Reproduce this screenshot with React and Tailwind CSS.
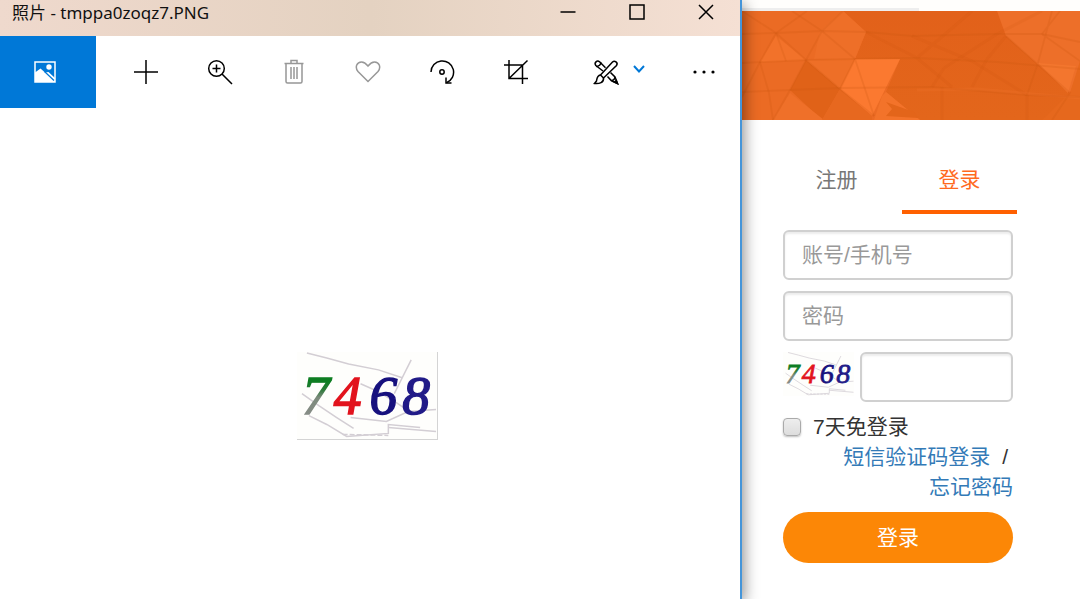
import { useState } from 'react';

// Captcha digits with their noise lines
function CaptchaImage({ className, id }) {
  return (
    <svg viewBox="0 0 141 88" className={className} role="img" aria-label="7468">
      <defs>
        <linearGradient id={id} x1="0" y1="0" x2="0" y2="1">
          <stop offset="0.3" stopColor="#0d7d22" />
          <stop offset="0.42" stopColor="#2b7a38" />
          <stop offset="0.55" stopColor="#7c8a7c" />
          <stop offset="1" stopColor="#8d8d8d" />
        </linearGradient>
      </defs>
      <rect width="141" height="88" fill="#fefefc" />
      <g fill="none" stroke="#d3ced4" strokeWidth="1.5">
        <path d="M10 1 L30 6 L52 12 L82 18 L106 26" />
        <path d="M5 42 L22 54 L40 66 L57 77" />
        <path d="M12 64 L30 73 L50 85 L92 82 L92 73 L124 76" />
        <path d="M64 32 L80 39 L100 51 L112 59" />
        <path d="M115 8 L98 42" />
        <path d="M54 66 L90 70 L112 60 L140 58" />
        <path d="M92 76 L140 80" />
        <path d="M46 83 L92 84" strokeDasharray="5 2" />
      </g>
      <g fontFamily="'Liberation Sans Narrow', 'Liberation Serif', serif" fontStyle="italic" fontSize="56" textAnchor="middle" strokeWidth="1.5">
        <text x="19" y="62" fill={`url(#${id})`} stroke={`url(#${id})`}>7</text>
        <text x="51" y="62" fill="#e2131d" stroke="#e2131d">4</text>
        <text x="87" y="62" fill="#17117e" stroke="#17117e">6</text>
        <text x="120" y="62" fill="#211b88" stroke="#211b88">8</text>
      </g>
    </svg>
  );
}

function Icon({ children, className = 'text-black' }) {
  return (
    <svg
      width="26"
      height="26"
      viewBox="0 0 26 26"
      fill="none"
      stroke="currentColor"
      strokeWidth="1.5"
      className={className}
      aria-hidden="true"
    >
      {children}
    </svg>
  );
}

const tools = [
  {
    name: '添加',
    icon: (
      <Icon>
        <path d="M13 1V25M1 13H25" />
      </Icon>
    ),
  },
  {
    name: '缩放',
    icon: (
      <Icon>
        <circle cx="9.5" cy="9.5" r="7.8" />
        <path d="M9.5 5.5V13.5M5.5 9.5H13.5M15 15L25 25" />
      </Icon>
    ),
  },
  {
    name: '删除',
    icon: (
      <Icon className="text-[#979797]">
        <path d="M3.5 4.5H22.5M10 4V1.5H16V4M5 4.5V22.5Q5 24 6.5 24H19.5Q21 24 21 22.5V4.5M10 8V20M13 8V20M16 8V20" />
      </Icon>
    ),
  },
  {
    name: '收藏',
    icon: (
      <Icon className="text-[#979797]">
        <path d="M13 22.5L3 12.5C-.5 8 2 3 6.5 3C9.5 3 11 4.5 13 7C15 4.5 16.5 3 19.5 3C24 3 26.5 8 23 12.5Z" />
      </Icon>
    ),
  },
  {
    name: '旋转',
    icon: (
      <Icon>
        <path d="M2 13A11.3 11.3 0 1 1 17.5 23.7" />
        <circle cx="13" cy="13" r="2.2" />
        <path d="M17 18.5V24H22.5" />
      </Icon>
    ),
  },
  {
    name: '裁剪',
    icon: (
      <Icon>
        <path d="M1 6H19.5V25M6 1V19.5H25M6 19.5L24.5 1.5" />
      </Icon>
    ),
  },
];

function PhotoViewer() {
  return (
    <main className="relative z-10 flex min-w-0 flex-1 flex-col border-r-2 border-[#4495d9] bg-white shadow-[2px_4px_14px_rgba(0,0,0,0.45)]">
      {/* Title bar */}
      <header className="flex h-9 items-start justify-between bg-linear-to-r from-[#efd9cd] via-[#e4d2c1] to-[#f5e0d4]">
        <h1 className="pl-3 font-['Noto_Sans','Noto_Sans_CJK_SC',sans-serif] text-[17px] leading-[26px] text-[#111]">
          照片 - tmppa0zoqz7.PNG
        </h1>
        <div className="flex text-black">
          <button type="button" aria-label="最小化" className="flex h-6 w-[69px] items-center justify-center">
            <svg width="16" height="16" viewBox="0 0 16 16" stroke="currentColor" strokeWidth="1.5">
              <path d="M0.5 8H15.5" />
            </svg>
          </button>
          <button type="button" aria-label="最大化" className="flex h-6 w-[69px] items-center justify-center">
            <svg width="16" height="16" viewBox="0 0 16 16" fill="none" stroke="currentColor" strokeWidth="1.5">
              <rect x="1" y="1" width="14" height="14" />
            </svg>
          </button>
          <button type="button" aria-label="关闭" className="flex h-6 w-[69px] items-center justify-center">
            <svg width="16" height="16" viewBox="0 0 16 16" stroke="currentColor" strokeWidth="1.5">
              <path d="M1 1L15 15M15 1L1 15" />
            </svg>
          </button>
        </div>
      </header>

      {/* Toolbar */}
      <nav className="flex h-[72px] items-stretch">
        <button type="button" aria-label="查看所有照片" className="mr-[13px] flex w-24 items-center justify-center bg-[#0078d7] pr-[6px]">
          <svg width="22" height="22" viewBox="0 0 22 22">
            <path d="M1 1H21V21H1Z" fill="none" stroke="#fff" strokeWidth="1.5" />
            <path d="M1 11.5L6.5 7.5L11 11.5L14.5 11L21 17V21H1Z" fill="#fff" />
            <path d="M10.5 10.5L20 19.5" stroke="#0078d7" strokeWidth="1.2" />
            <circle cx="15" cy="6" r="2.7" fill="#fff" />
          </svg>
        </button>
        {tools.map((tool) => (
          <button key={tool.name} type="button" aria-label={tool.name} className="flex w-[74px] items-center justify-center">
            {tool.icon}
          </button>
        ))}
        <div className="ml-auto flex">
          <button type="button" aria-label="编辑和创建" className="flex items-center gap-[14px] pr-[23px]">
            <Icon>
              {/* pencil, lying under the brush */}
              <g strokeWidth="1.5">
                <path d="M10 12L2.8 6.5C.8 3.8 4 .8 6.6 2.8L12.5 8.8" />
                <path d="M3 7.5C6 7.5 8 5.5 7.8 3.2" />
                <path d="M14.5 17.5L18.5 21.8L24.5 24.5L22 18L17.5 13.5M18.5 21.8C20.5 21.5 21.8 20 22 18" />
                <path d="M21.5 23L24.5 24.5L23.3 21.5Z" fill="currentColor" />
              </g>
              {/* brush */}
              <g strokeWidth="1.5">
                <path d="M7.5 16L19.5 3C21.5 1 25.5 3.5 23.5 6.5L10.5 19Z" fill="#fff" />
                <path d="M7.5 16C4 16.5 4 19 3.5 22L1.5 24.5C6.5 25 11 23.5 10.5 19" />
              </g>
            </Icon>
            <svg width="12" height="8" viewBox="0 0 12 8" fill="none" stroke="#0078d7" strokeWidth="2" className="mb-[6px]">
              <path d="M1 1L6 6.5L11 1" />
            </svg>
          </button>
          <button type="button" aria-label="更多" className="flex w-[72px] items-center justify-center">
            <svg width="22" height="4" viewBox="0 0 22 4">
              <circle cx="2" cy="2" r="1.6" />
              <circle cx="11" cy="2" r="1.6" />
              <circle cx="20" cy="2" r="1.6" />
            </svg>
          </button>
        </div>
      </nav>

      <section className="flex flex-1 items-start justify-center pt-[244px] pr-[6px]">
        <CaptchaImage id="photo-seven" className="w-[141px] border-r border-b border-[#d4d4d4]" />
      </section>
    </main>
  );
}

// Low-poly orange strip above the form
function Banner() {
  return (
    <svg viewBox="0 0 338 109" preserveAspectRatio="xMidYMid slice" className="block h-[109px] w-full" aria-hidden="true">
      <defs>
        <linearGradient id="banner-base" x1="0" y1="0" x2="0" y2="1">
          <stop offset="0" stopColor="#e2611a" />
          <stop offset="1" stopColor="#e3661b" />
        </linearGradient>
      </defs>
      <rect width="338" height="109" fill="url(#banner-base)" />
      <path d="M0 0H101L124 21L113 48H158L144 81L178 109H0Z" fill="#eb6b24" />
      <path d="M78 20L101 0L124 21L113 48L72 48Z" fill="#ee6f28" />
      <path d="M34 25L64 49L18 51Z" fill="#f2722a" />
      <path d="M113 48H158L130 105L98 78Z" fill="#fb7930" />
      <path d="M64 49L98 78L80 109L48 79Z" fill="#e06218" />
      <path d="M64 49L113 48L98 78Z" fill="#ee6f27" />
      <path d="M48 82L82 109H31Z" fill="#ef7029" />
      <path d="M98 78L130 105V109H80Z" fill="#e7681f" />
      <path d="M144 81L178 109H132L140 85Z" fill="#f3732a" />
      <path d="M144 91L172 101L176 107L144 105L150 98Z" fill="#e3651a" />
      <path d="M255 0H338V55L328 82L264 25Z" fill="#ed6f29" />
      <path d="M296 52L334 55L326 82Z" fill="#f3762e" />
      <path d="M338 50V109H300L328 82Z" fill="#e6681d" />
      <g fill="none" stroke="#c9530d" strokeOpacity="0.2" strokeWidth="1.8">
        <path d="M0 23L34 22L80 20L124 21L170 25L255 23L300 23L338 31" />
        <path d="M0 52L64 49L113 48L175 47L255 51L338 58" />
        <path d="M0 81L48 79L98 77L190 76L285 84L338 86" />
        <path d="M0 0L34 22L64 49L98 78L132 105M65 0L34 22L18 51L0 86" />
        <path d="M50 0L80 20L113 48M101 0L80 20L64 49L48 79L31 109" />
        <path d="M18 51L27 82L31 109M113 48L98 78M113 48L132 105" />
        <path d="M34 22L44 50M264 25L328 82L310 109M300 23L318 0M300 23L338 50M285 84L296 52L310 0" />
      </g>
      <g fill="none" stroke="#c9530d" strokeOpacity="0.1" strokeWidth="3">
        <path d="M124 21L175 47L210 76M175 47L230 0M170 25L230 50L285 84" />
        <path d="M190 76L202 57L255 23L300 0M230 76L245 48L264 25M200 109V76M285 109V84" />
      </g>
      <path d="M175 79L235 78L338 87" stroke="#f77a32" strokeOpacity="0.2" strokeWidth="3" fill="none" />
    </svg>
  );
}

const inputStyle =
  'h-[50px] w-full min-w-0 rounded-md border-2 border-[#d0d0d0] bg-white px-[17px] text-[21px] leading-[30px] text-[#555] shadow-[inset_0_2px_2px_rgba(0,0,0,0.075)] outline-none placeholder:text-[#999] focus:border-[#66afe9]';

function LoginPanel() {
  const [tab, setTab] = useState('login');
  const [remember, setRemember] = useState(false);

  const tabStyle = (name) =>
    `h-16 flex-1 border-b-4 ${tab === name ? 'border-[#ff6000] text-[#ff6a1f]' : 'border-transparent text-[#777]'}`;

  return (
    <aside className="w-[338px] shrink-0 bg-white font-['Liberation_Sans','Noto_Sans_CJK_SC',sans-serif] text-[21px] leading-[30px] text-[#333]">
      <div className="h-[11px] bg-[#fffefc] pt-2">
        <div className="h-[3px] w-[177px] bg-[#eee]"></div>
      </div>
      <Banner />

      <div className="pt-[30px] pr-[63px] pl-[37px]">
        <div className="flex gap-2">
          <button type="button" className={tabStyle('register')} onClick={() => setTab('register')}>
            注册
          </button>
          <button type="button" className={tabStyle('login')} onClick={() => setTab('login')}>
            登录
          </button>
        </div>

        <form className="mt-4 flex flex-col px-1" onSubmit={(e) => e.preventDefault()}>
          <div className="flex flex-col gap-[11px]">
            <input type="text" aria-label="账号/手机号" placeholder="账号/手机号" className={inputStyle} />
            <input type="password" aria-label="密码" placeholder="密码" className={inputStyle} />
            <div className="flex items-start gap-[6px]">
              <CaptchaImage id="form-seven" className="w-[71px] shrink-0" />
              <input type="text" aria-label="验证码" className={inputStyle} />
            </div>
          </div>

          <label className="mt-[10px] flex items-center gap-3">
            <input
              type="checkbox"
              checked={remember}
              onChange={(e) => setRemember(e.target.checked)}
              className="size-[18px] appearance-none rounded border border-[#aaa] bg-linear-to-b from-[#eee] to-[#ddd] shadow-[0_1px_2px_rgba(0,0,0,0.25)] checked:bg-[#4495d9] checked:bg-none"
            />
            7天免登录
          </label>

          <div className="text-right">
            <p className="pr-[5px]">
              <a href="#sms" className="mr-3 text-[#337ab7]">短信验证码登录</a>/
            </p>
            <a href="#forgot" className="block text-[#337ab7]">忘记密码</a>
          </div>

          <button type="submit" className="mt-[10px] h-[51px] rounded-full bg-[#fc8706] text-white">
            登录
          </button>
        </form>
      </div>
    </aside>
  );
}

function App() {
  return (
    <div className="flex min-h-screen overflow-hidden bg-white">
      <PhotoViewer />
      <LoginPanel />
    </div>
  );
}

export default App;
